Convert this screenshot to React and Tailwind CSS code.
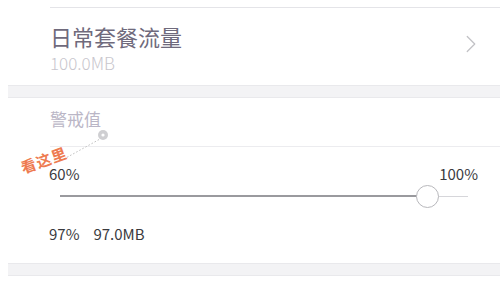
import { ChevronRight } from 'lucide-react';

const font = { fontFamily: '"Noto Sans CJK SC", "Noto Sans", sans-serif' };

const Band = () => (
  <div className="ml-[8px] h-[13px] bg-[#f3f3f5] border-t border-b border-[#e9e9ec]" />
);

const Slider = ({ value }) => (
  <div className="relative h-[24px] ml-[60px] mr-[32px] flex items-center">
    <div className="h-[2px] bg-[#9a9a9e]" style={{ width: `${value}%` }} />
    <div className="h-[1px] flex-1 bg-[#d6d6da]" />
    <div
      className="absolute top-[1px] w-[23px] h-[23px] -ml-[11px] rounded-full bg-white border border-[#b8b8bc]"
      style={{ left: `${value}%` }}
    />
  </div>
);

export default function App() {
  return (
    <div className="w-[500px] h-[291px] bg-white overflow-hidden relative" style={font}>
      <div className="h-[7px]" />
      <div className="ml-[50px] border-t border-[#e4e4e8]" />

      <div className="flex items-center justify-between pl-[50px] pr-[14px] h-[77px]">
        <div className="flex flex-col pt-[2px]">
          <span className="text-[22px] leading-[28px] text-[#6f6a7c]">日常套餐流量</span>
          <span className="text-[17px] leading-[20px] font-light text-[#c8c6cd] mt-[3px]">100.0MB</span>
        </div>
        <ChevronRight size={30} strokeWidth={1} className="text-[#c2c2c6] mt-[-6px]" />
      </div>

      <Band />

      <div className="pl-[50px] pt-[9px] h-[48px]">
        <span className="text-[17px] leading-[24px] text-[#bab6c6]">警戒值</span>
      </div>
      <div className="ml-[50px] border-t border-[#ececef]" />

      <div className="flex justify-between pl-[49px] pr-[22px] pt-[17px]">
        <span className="text-[15px] leading-[20px] text-[#3a3a3e]">60%</span>
        <span className="text-[15px] leading-[20px] text-[#3a3a3e]">100%</span>
      </div>

      <Slider value={90} />

      <div className="flex gap-[14px] pl-[49px] pt-[16px] h-[55px]">
        <span className="text-[15px] leading-[20px] text-[#3a3a3e]">97%</span>
        <span className="text-[15px] leading-[20px] text-[#3a3a3e]">97.0MB</span>
      </div>

      <Band />

      <svg className="absolute left-0 top-0 pointer-events-none" width="500" height="291">
        <line x1="64" y1="159" x2="100" y2="139" stroke="#bdbdbd" strokeWidth="1" strokeDasharray="1.5 2" />
        <circle cx="103" cy="135" r="5" fill="#cfcfd2" />
        <circle cx="103" cy="135" r="1.6" fill="#ffffff" />
      </svg>
      <span className="absolute left-[20px] top-[150px] text-[15px] leading-[20px] font-bold text-[#ee7b50] -rotate-[20deg] tracking-[1px]">
        看这里
      </span>
    </div>
  );
}
